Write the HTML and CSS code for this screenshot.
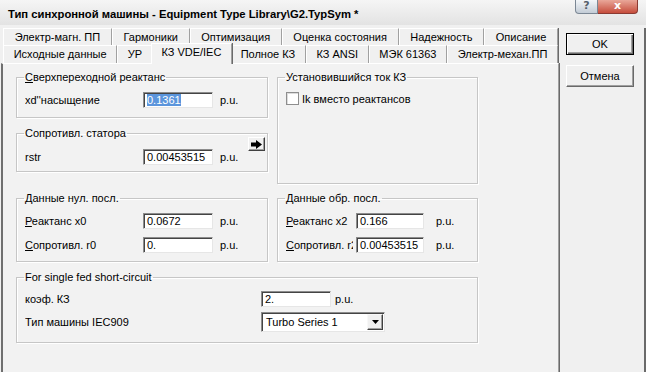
FILE: index.html
```html
<!DOCTYPE html>
<html lang="ru">
<head>
    <meta charset="UTF-8">
    <title>Тип синхронной машины</title>
    <link rel="stylesheet" href="styles.css">
</head>
<body>
<div class="window">
    <div class="titlebar">
        <span class="title">Тип синхронной машины - Equipment Type Library\G2.TypSym *</span>
        <div class="caption-buttons">
            <span class="cap-help">?</span>
            <span class="cap-close">x</span>
        </div>
    </div>

    <div class="main">
        <div class="tabs-area">
            <div class="tab-row back">
                <span class="tab">Электр-магн. ПП</span>
                <span class="tab">Гармоники</span>
                <span class="tab">Оптимизация</span>
                <span class="tab">Оценка состояния</span>
                <span class="tab">Надежность</span>
                <span class="tab">Описание</span>
            </div>
            <div class="tab-row front">
                <span class="tab">Исходные данные</span>
                <span class="tab">УР</span>
                <span class="tab active">КЗ VDE/IEC</span>
                <span class="tab">Полное КЗ</span>
                <span class="tab">КЗ ANSI</span>
                <span class="tab">МЭК 61363</span>
                <span class="tab">Электр-механ.ПП</span>
            </div>

            <div class="panel">
                <div class="row1">
                    <div class="col-left">
                        <fieldset class="g-xd">
                            <legend><u>С</u>верхпереходной реактанс</legend>
                            <div class="line">
                                <span class="lbl">xd''насыщение</span>
                                <div class="field"><span class="sel">0.1361</span></div>
                                <span class="unit">p.u.</span>
                            </div>
                        </fieldset>
                        <fieldset class="g-rstr">
                            <legend>Сопротивл. статора</legend>
                            <div class="arrow-row">
                                <button type="button" class="arrow-btn">
                                    <svg width="11" height="9" viewBox="0 0 11 9"><path d="M0 2.5h5V0l6 4.5L5 9V6.5H0z" fill="#000"/></svg>
                                </button>
                            </div>
                            <div class="line">
                                <span class="lbl">rstr</span>
                                <div class="field">0.00453515</div>
                                <span class="unit">p.u.</span>
                            </div>
                        </fieldset>
                    </div>
                    <fieldset class="g-ik">
                        <legend>Установившийся ток КЗ</legend>
                        <label class="check"><span class="box"></span>Ik вместо реактансов</label>
                    </fieldset>
                </div>

                <div class="row2">
                    <fieldset class="g-zero">
                        <legend>Данные нул. посл.</legend>
                        <div class="line">
                            <span class="lbl"><u>Р</u>еактанс x0</span>
                            <div class="field">0.0672</div>
                            <span class="unit">p.u.</span>
                        </div>
                        <div class="line">
                            <span class="lbl"><u>С</u>опротивл. r0</span>
                            <div class="field">0.</div>
                            <span class="unit">p.u.</span>
                        </div>
                    </fieldset>
                    <fieldset class="g-neg">
                        <legend>Данные обр. посл.</legend>
                        <div class="line">
                            <span class="lbl"><u>Р</u>еактанс x2</span>
                            <div class="field">0.166</div>
                            <span class="unit">p.u.</span>
                        </div>
                        <div class="line">
                            <span class="lbl"><u>С</u>опротивл. r2</span>
                            <div class="field">0.00453515</div>
                            <span class="unit">p.u.</span>
                        </div>
                    </fieldset>
                </div>

                <fieldset class="g-single">
                    <legend>For single fed short-circuit</legend>
                    <div class="line">
                        <span class="lbl">коэф. КЗ</span>
                        <div class="field">2.</div>
                        <span class="unit">p.u.</span>
                    </div>
                    <div class="line tall">
                        <span class="lbl">Тип машины IEC909</span>
                        <div class="select">
                            <span class="value">Turbo Series 1</span>
                            <span class="drop"><svg width="7" height="4" viewBox="0 0 7 4"><path d="M0 0h7L3.5 4z" fill="#000"/></svg></span>
                        </div>
                    </div>
                </fieldset>
            </div>
        </div>

        <div class="buttons">
            <button type="button" class="btn default">OK</button>
            <button type="button" class="btn">Отмена</button>
        </div>
    </div>
</div>
</body>
</html>
```

FILE: styles.css
```css
* {
    box-sizing: border-box;
}

body {
    margin: 0;
    background-color: #f0f0f0;
    font-family: "Liberation Sans", Arial, sans-serif;
    font-size: 11px;
    color: #000;
}

.window {
    width: 646px;
    height: 372px;
    overflow: hidden;
    background: #f0f0f0;
}

/* title bar */
.titlebar {
    display: flex;
    height: 25px;
    background: linear-gradient(#f5f5f5, #e3e3e3);
}

.title {
    font-weight: bold;
    font-size: 11.25px;
    padding: 8px 0 0 8px;
}

.caption-buttons {
    display: flex;
    align-items: flex-start;
    margin-left: auto;
    margin-right: 8px;
}

.cap-help {
    width: 23px;
    height: 14px;
    border: 1px solid #7b8794;
    border-top: none;
    border-radius: 0 0 0 4px;
    background: linear-gradient(#f3f6f9, #c3ccd6);
    color: #56606b;
    font: bold 11px "DejaVu Sans", sans-serif;
    line-height: 12px;
    text-align: center;
}

.cap-close {
    width: 40px;
    height: 14px;
    border: 1px solid #8a3a32;
    border-top: none;
    border-left: none;
    border-radius: 0 0 4px 0;
    background: linear-gradient(#e9a799, #c64d3c);
    color: #fff;
    font: bold 11px "DejaVu Sans", sans-serif;
    line-height: 11px;
    text-align: center;
}

/* body of dialog */
.main {
    display: flex;
    height: 347px;
    margin-top: 3px;
    border-right: 2px solid #6a6a6a;
}

.tabs-area {
    width: 559px;
    display: flex;
    flex-direction: column;
}

.tab-row {
    display: flex;
    margin-left: 1px;
    padding: 0 1px 0 2px;
}

.tab-row.back {
    height: 17px;
}

.tab-row.front {
    height: 18px;
}

.tab {
    flex: 1 1 auto;
    padding: 0 8px;
    white-space: nowrap;
    text-align: center;
    line-height: 17px;
    border-top: 1px solid #fff;
    border-left: 1px solid #fff;
    border-right: 1px solid #a0a0a0;
    box-shadow: 1px 0 0 #6a6a6a;
}

.tab.active {
    position: relative;
    z-index: 1;
    margin: -2px -2px 0;
    height: 21px;
    line-height: 16px;
    background: #f2f2f2;
}

.panel {
    height: 320px;
    margin-left: 1px;
    padding: 7px 0 0 13px;
    background: #f2f2f2;
    border-top: 1px solid #fff;
    border-left: 2px solid #6f6f6f;
    border-right: 1px solid #a0a0a0;
    box-shadow: 1px 0 0 #6a6a6a;
}

/* group boxes */
fieldset {
    margin: 0;
    padding: 0 8px;
    min-width: 0;
    border: 1px solid #c6c6c6;
    box-shadow: inset 1px 1px 0 #fff, 1px 1px 0 #fff;
}

legend {
    padding: 0 1px;
    margin-left: -1px;
    line-height: 12px;
}

.line {
    display: flex;
    align-items: center;
    height: 16px;
}

.line + .line {
    margin-top: 8px;
}

.lbl {
    width: 118px;
    white-space: nowrap;
    overflow: hidden;
}

.field {
    width: 70px;
    height: 16px;
    padding-left: 3px;
    line-height: 14px;
    white-space: nowrap;
    background: #fff;
    border: 1px solid;
    border-color: #8c8c8c #e6e6e6 #e6e6e6 #8c8c8c;
    box-shadow: inset 1px 1px 0 #444;
}

.sel {
    background: #5b95dc;
    color: #fff;
}

.unit {
    margin-left: 7px;
}

.row1 {
    display: flex;
    align-items: flex-start;
    gap: 9px;
}

.col-left {
    width: 252px;
    display: flex;
    flex-direction: column;
    gap: 9px;
}

.g-xd {
    height: 47px;
}

.g-xd .line {
    margin-top: 9px;
}

.g-rstr {
    height: 45px;
}

.g-rstr .line {
    margin-top: -2px;
}

.arrow-row {
    display: flex;
    justify-content: flex-end;
    height: 14px;
    margin: -2px -6px 0 0;
}

.arrow-btn {
    width: 17px;
    height: 14px;
    padding: 0;
    display: flex;
    align-items: center;
    justify-content: center;
    background: #f0f0f0;
    border: 1px solid;
    border-color: #fff #404040 #404040 #fff;
    box-shadow: inset -1px -1px 0 #a0a0a0;
}

.g-ik {
    width: 201px;
    height: 113px;
}

.check {
    display: flex;
    align-items: center;
    gap: 3px;
    height: 13px;
    margin-top: 9px;
}

.box {
    width: 13px;
    height: 13px;
    background: #fff;
    border: 1px solid #8e8e8e;
    box-shadow: inset 1px 1px 0 #dcdcdc;
}

.row2 {
    display: flex;
    gap: 9px;
    margin-top: 8px;
}

.g-zero {
    width: 252px;
    height: 70px;
}

.g-neg {
    width: 201px;
    height: 70px;
}

.g-zero .line:first-of-type,
.g-neg .line:first-of-type {
    margin-top: 9px;
}

.g-neg .lbl {
    width: 67px;
    margin-right: 3px;
}

.g-neg .field {
    width: 68px;
}

.g-neg .unit {
    margin-left: 12px;
}

.g-single {
    width: 462px;
    height: 72px;
    margin-top: 9px;
}

.g-single .lbl {
    width: 236px;
}

.g-single .line:first-of-type {
    margin-top: 8px;
}

.g-single .line.tall {
    height: 20px;
    margin-top: 5px;
}

.g-single .unit {
    margin-left: 4px;
}

/* combo box */
.select {
    width: 124px;
    height: 20px;
    display: flex;
    background: #fff;
    border: 1px solid;
    border-color: #8c8c8c #e6e6e6 #e6e6e6 #8c8c8c;
    box-shadow: inset 1px 1px 0 #444;
}

.select .value {
    flex: 1;
    padding-left: 4px;
    line-height: 18px;
}

.select .drop {
    width: 16px;
    margin: 1px 1px 1px 0;
    display: flex;
    align-items: center;
    justify-content: center;
    background: #f0f0f0;
    border: 1px solid;
    border-color: #f8f8f8 #404040 #404040 #f8f8f8;
    box-shadow: inset -1px -1px 0 #a0a0a0;
}

/* OK / Cancel */
.buttons {
    display: flex;
    flex-direction: column;
    gap: 10px;
    margin-left: 7px;
    padding-top: 5px;
}

.btn {
    width: 68px;
    height: 22px;
    padding: 0;
    font: 11px "Liberation Sans", Arial, sans-serif;
    color: #000;
    background: #f0f0f0;
    border: 1px solid;
    border-color: #fff #696969 #696969 #fff;
    box-shadow: inset -1px -1px 0 #a0a0a0;
}

.btn.default {
    border-color: #000;
    box-shadow: inset 1px 1px 0 #fff, inset -1px -1px 0 #696969, inset -2px -2px 0 #a0a0a0;
}
```
